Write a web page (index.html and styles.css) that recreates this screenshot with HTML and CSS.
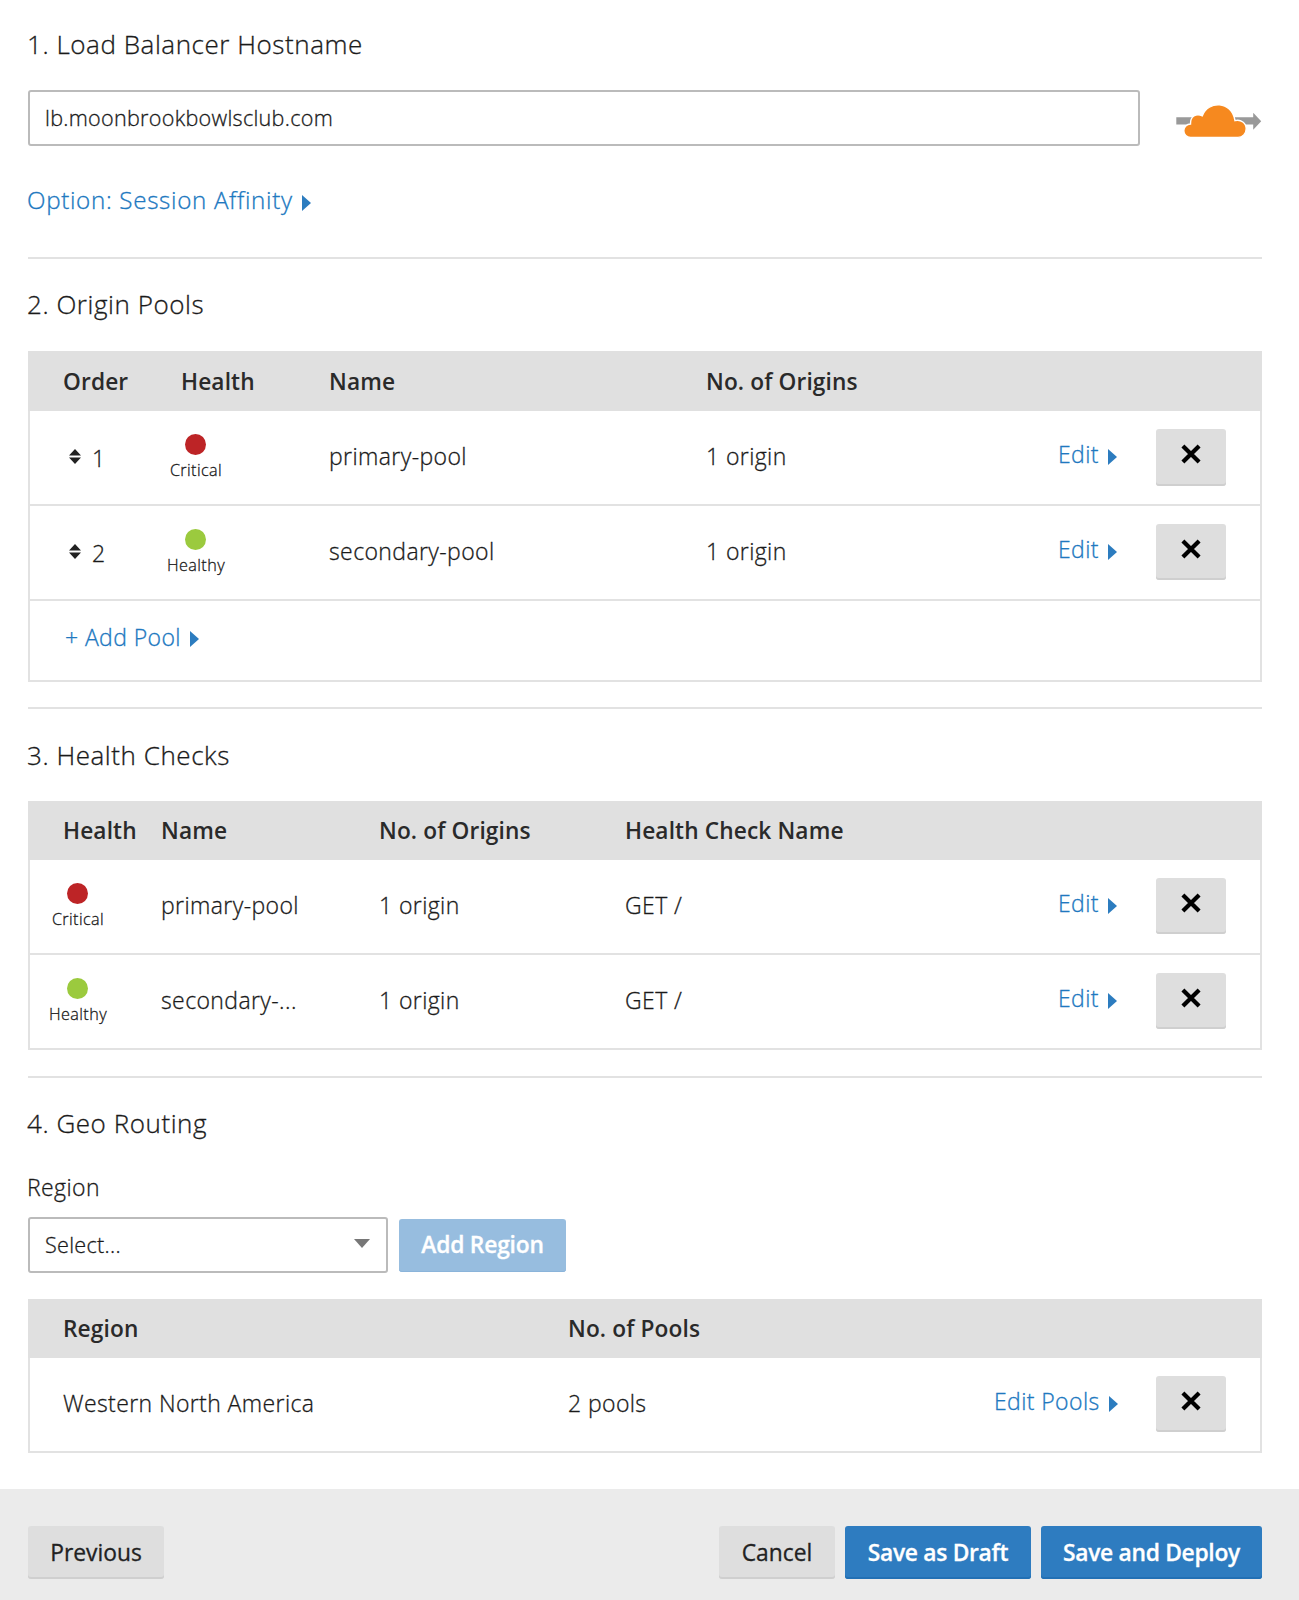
FILE: index.html
```html
<!DOCTYPE html>
<html lang="en">
<head>
<meta charset="utf-8">
<title>Load Balancer</title>
<link rel="stylesheet" href="styles.css">
</head>
<body>
<svg class="defs" aria-hidden="true">
  <symbol id="cross" viewBox="0 0 20 20"><path d="M1.9 1.9 18.1 18.1M18.1 1.9 1.9 18.1" stroke="#000" stroke-width="4.2" fill="none"/></symbol>
  <symbol id="sort" viewBox="0 0 12 15"><path d="M6 0 12 6.4H0zM6 15 0 8.6h12z" fill="#222"/></symbol>
</svg>
<main class="content">
  <section class="section hostname">
    <h2 class="title">1. Load Balancer Hostname</h2>
    <div class="host-row">
      <input class="input" type="text" value="lb.moonbrookbowlsclub.com">
      <svg class="cloud" width="86" height="34" viewBox="0 0 86 34">
        <path d="M.3 14.300H77.200V9.700L85.200 18.200 77.200 26.700V21.500H.3z" fill="#999"/>
        <path d="M14.500 34.400a6.700 6.700 0 0 1 0-13.400C14.100 13.500 20 9.900 26.300 12.800C32-2.400 55.500-2.800 59 17.600c6-1.500 11.200 2.400 11.200 8.200 0 4.700-3.600 8.600-8.200 8.600z" fill="#f6891f" stroke="#fff" stroke-width="1.400"/>
      </svg>
    </div>
    <a class="link option">Option: Session Affinity<i class="caret"></i></a>
  </section>

  <section class="section pools">
    <h2 class="title">2. Origin Pools</h2>
    <div class="table table-pools">
      <div class="row head"><span>Order</span><span class="head-health">Health</span><span>Name</span><span>No. of Origins</span></div>
      <div class="row">
        <span class="order"><svg width="12" height="15"><use href="#sort"/></svg>1</span>
        <span class="health"><i class="dot critical"></i>Critical</span>
        <span>primary-pool</span><span>1 origin</span>
        <a class="link">Edit<i class="caret"></i></a>
        <button class="btn remove tall"><svg width="20" height="20"><use href="#cross"/></svg></button>
      </div>
      <div class="row">
        <span class="order"><svg width="12" height="15"><use href="#sort"/></svg>2</span>
        <span class="health"><i class="dot healthy"></i>Healthy</span>
        <span>secondary-pool</span><span>1 origin</span>
        <a class="link">Edit<i class="caret"></i></a>
        <button class="btn remove"><svg width="20" height="20"><use href="#cross"/></svg></button>
      </div>
      <div class="add-row"><a class="link">+ Add Pool<i class="caret"></i></a></div>
    </div>
  </section>

  <section class="section checks">
    <h2 class="title">3. Health Checks</h2>
    <div class="table table-checks">
      <div class="row head"><span class="head-health">Health</span><span>Name</span><span>No. of Origins</span><span>Health Check Name</span></div>
      <div class="row">
        <span class="health"><i class="dot critical"></i>Critical</span>
        <span>primary-pool</span><span>1 origin</span><span class="get">GET /</span>
        <a class="link">Edit<i class="caret"></i></a>
        <button class="btn remove"><svg width="20" height="20"><use href="#cross"/></svg></button>
      </div>
      <div class="row">
        <span class="health"><i class="dot healthy"></i>Healthy</span>
        <span>secondary-...</span><span>1 origin</span><span class="get">GET /</span>
        <a class="link">Edit<i class="caret"></i></a>
        <button class="btn remove"><svg width="20" height="20"><use href="#cross"/></svg></button>
      </div>
    </div>
  </section>

  <section class="section geo">
    <h2 class="title">4. Geo Routing</h2>
    <div class="label">Region</div>
    <div class="region-row">
      <div class="select">Select...<i class="down"></i></div>
      <button class="btn add-region">Add Region</button>
    </div>
    <div class="table table-geo">
      <div class="row head"><span>Region</span><span>No. of Pools</span></div>
      <div class="row">
        <span>Western North America</span><span>2 pools</span>
        <a class="link">Edit Pools<i class="caret"></i></a>
        <button class="btn remove"><svg width="20" height="20"><use href="#cross"/></svg></button>
      </div>
    </div>
  </section>
</main>
<footer class="footer">
  <button class="btn previous">Previous</button>
  <button class="btn cancel">Cancel</button>
  <button class="btn primary draft">Save as Draft</button>
  <button class="btn primary deploy">Save and Deploy</button>
</footer>
</body>
</html>
```
FILE: styles.css
```css
* { box-sizing: border-box; }
body {
  margin: 0;
  height: 1600px;
  display: flex;
  flex-direction: column;
  background: #fff;
  color: #1a1a1a;
  font: 300 23px/32px "Open Sans", sans-serif;
  letter-spacing: .4px;
  -webkit-text-stroke: .3px currentColor;
  overflow: hidden;
}
.defs { display: none; }
.content { flex: 0 0 1489px; padding: 0 37px 0 28px; }
.section { border-bottom: 2px solid #e2e2e2; }
.title { margin: 0 0 0 -1px; font-size: 26px; line-height: 36px; font-weight: 300; letter-spacing: .55px; }
.hostname { height: 259px; padding-top: 26px; }
.pools { height: 450px; padding-top: 27px; }
.checks { height: 369px; padding-top: 28px; }
.geo { border: 0; padding-top: 27px; }

.host-row { display: flex; align-items: flex-start; margin-top: 28px; gap: 36px; }
.input, .select {
  height: 56px;
  border: 2px solid #bbb;
  border-radius: 3px;
  background: #fff;
  color: #1a1a1a;
  font: 300 21.600px/32px "Open Sans", sans-serif;
  letter-spacing: .28px;
  -webkit-text-stroke: .3px currentColor;
}
.input { width: 1112px; padding: 0 15px 2px; }
.cloud { margin-top: 13px; overflow: visible; }
.link { display: flex; align-items: center; color: #2078bf; white-space: nowrap; }
.caret {
  border-left: 9px solid #2c7cbf;
  border-top: 8.500px solid transparent;
  border-bottom: 8.500px solid transparent;
  margin: 4px 0 0 9px;
}
.option { margin: 38px 0 0 -1px; font-size: 24.200px; letter-spacing: .67px; }
.option .caret { margin-top: 6px; }

.table { border: 2px solid #e2e2e2; border-top: 0; }
.row { display: grid; align-items: center; height: 95px; border-bottom: 2px solid #e2e2e2; white-space: nowrap; }
.row:last-child { border-bottom: 0; height: 93px; }
.row > span { padding-bottom: 4px; }
.table-pools { margin-top: 29px; }
.table-checks { margin-top: 28px; }
.table-pools .row { grid-template-columns: 118px 148px 377px 352px 98px 1fr; padding-left: 33px; }
.table-checks .row { grid-template-columns: 98px 218px 246px 433px 98px 1fr; padding-left: 33px; }
.table-geo .row { grid-template-columns: 505px 426px 162px 1fr; padding-left: 33px; }
.table .head {
  height: 59px;
  margin: 0 -2px;
  padding-left: 35px;
  border: 0;
  background: #e0e0e0;
  color: #2a2a2a;
  font-size: 22.700px;
  font-weight: 600;
  letter-spacing: .12px;
  -webkit-text-stroke: 0;
}
.row.head > span { padding-bottom: 0; }
.table-pools .head { height: 60px; }
.table-pools .head > span { padding-top: 2px; }
.row > .order { display: flex; align-items: center; gap: 11px; padding: 0 0 0 6px; }
.order svg { margin-top: -3px; }
.row > .health {
  display: flex;
  flex-direction: column;
  align-items: center;
  width: 80px;
  margin-left: -25px;
  padding: 0;
  font-size: 16.200px;
  line-height: 24px;
  gap: 3px;
  letter-spacing: .4px;
}
.dot { width: 21px; height: 21px; margin-right: 2px; border-radius: 50%; }
.critical { background: #bd2426; }
.healthy { background: #9bca3e; }
.row .link { margin-top: -7px; }
.row .link .caret { margin-top: 5px; }
.add-row { height: 79px; padding: 20px 0 0 35px; }

.btn {
  border: 0;
  border-radius: 3px;
  padding: 0;
  height: 53px;
  background: #dedede;
  box-shadow: inset 0 -2px #cfcfcf;
  color: #222;
  font: 400 22.800px/32px "Open Sans", sans-serif;
  letter-spacing: 0;
}
.remove { width: 70px; height: 56px; margin-top: -2px; padding-bottom: 6px; display: flex; align-items: center; justify-content: center; }
.remove.tall { height: 57px; margin-top: -1px; padding-bottom: 6px; }

.label { margin: 30px 0 0 -1px; }
.region-row { display: flex; align-items: center; gap: 11px; margin-top: 14px; }
.select { width: 360px; display: flex; align-items: center; justify-content: space-between; padding: 0 16px 0 15px; }
.down { border-top: 9px solid #777; border-left: 8px solid transparent; border-right: 8px solid transparent; margin-top: -4px; }
.add-region { width: 167px; background: #97bddf; color: #fff; font-weight: 600; letter-spacing: -.2px; box-shadow: inset 0 -1px #8bb4da; }
.table-geo { margin-top: 26px; }

.footer { flex: 1; display: flex; align-items: flex-start; gap: 10px; padding: 37px 37px 0 28px; background: #ebebeb; }
.previous { width: 136px; margin-right: auto; }
.cancel { width: 116px; }
.primary { background: #2e7cc0; color: #fff; font-weight: 600; letter-spacing: -.3px; box-shadow: inset 0 -2px #2270b5; }
.draft { width: 186px; }
.deploy { width: 221px; }
```
